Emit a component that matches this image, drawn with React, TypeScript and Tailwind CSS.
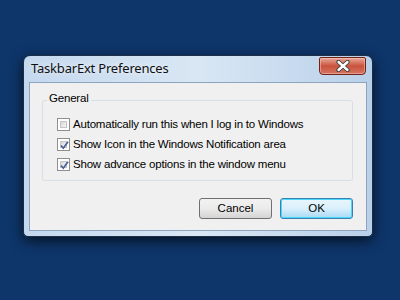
import React from "react";

const font = { fontFamily: '"Liberation Sans", Arial, sans-serif' };

function CheckBox({ checked }: { checked: boolean }) {
  return (
    <div className="w-[13px] h-[13px] border border-[#8f8f8f] bg-white p-[2px] shrink-0">
      <div className="w-full h-full border border-[#c6c6c6] bg-gradient-to-br from-[#d6d6d6] to-[#f6f6f6] relative">
        {checked && (
          <svg
            className="absolute -left-[2px] -top-[2px]"
            width="11"
            height="11"
            viewBox="0 0 11 11"
          >
            <path
              d="M2 5.5 L4.3 8.2 L9 1.8"
              fill="none"
              stroke="#4a5f97"
              strokeWidth="1.7"
            />
          </svg>
        )}
      </div>
    </div>
  );
}

function Option({ checked, label }: { checked: boolean; label: string }) {
  return (
    <div className="flex items-center gap-[3px] h-[13px]">
      <CheckBox checked={checked} />
      <span className="text-[11.5px] tracking-[-0.2px] leading-none text-black whitespace-nowrap">
        {label}
      </span>
    </div>
  );
}

export default function App() {
  return (
    <div
      className="w-[400px] h-[300px] bg-[#0e366b] pt-[55px] pl-[23px]"
      style={font}
    >
      <div className="w-[350px] h-[182px] rounded-t-[7px] rounded-b-[5px] border border-[#1b2f4a] bg-gradient-to-r from-[#c4d8ee] via-[#d9e7f4] to-[#b9d0e9] shadow-[0_4px_14px_rgba(0,0,0,0.7)] px-[5px] pb-[5px] flex flex-col">
        <div className="h-[26px] flex items-start justify-between">
          <span className="text-[13px] text-[#101010] pl-[2px] pt-[6px] leading-none [text-shadow:0_0_6px_#ffffff] [font-family:'Noto_Sans',sans-serif] tracking-[-0.2px]">
            TaskbarExt Preferences
          </span>
          <div className="w-[47px] h-[18px] mt-[1px] mr-[1px] rounded-b-[4px] rounded-t-[2px] border border-[#6e2418] bg-gradient-to-b from-[#e9a99a] via-[#c9523c] to-[#d47462] flex items-center justify-center shadow-[inset_0_0_0_1px_rgba(255,200,190,0.5)]">
            <svg width="14" height="12" viewBox="0 0 14 12">
              <path
                d="M2.5 2 L11.5 10 M11.5 2 L2.5 10"
                stroke="#3a3a3a"
                strokeWidth="4.2"
                strokeLinecap="round"
              />
              <path
                d="M2.5 2 L11.5 10 M11.5 2 L2.5 10"
                stroke="#ffffff"
                strokeWidth="2.4"
                strokeLinecap="round"
              />
            </svg>
          </div>
        </div>
        <div className="flex-1 border border-[#8da4bf] bg-[#f0f0f0] flex flex-col px-[12px] pt-[17px]">
          <div className="relative border border-[#d5dfe5] rounded-[3px] h-[81px] mr-[1px] pl-[14px] pt-[17px] flex flex-col gap-[7px]">
            <span className="absolute left-[4px] -top-[8px] px-[2px] bg-[#f0f0f0] text-[11.5px] tracking-[-0.2px] leading-none text-black">
              General
            </span>
            <Option
              checked={false}
              label="Automatically run this when I log in to Windows"
            />
            <Option checked={true} label="Show Icon in the Windows Notification area" />
            <Option checked={true} label="Show advance options in the window menu" />
          </div>
          <div className="flex justify-end gap-[8px] mt-[17px] mr-[1px]">
            <button className="w-[73px] h-[21px] rounded-[3px] border border-[#707070] bg-gradient-to-b from-[#f2f2f2] via-[#ebebeb] to-[#d4d4d4] text-[11.5px] leading-none text-black">
              Cancel
            </button>
            <button className="w-[73px] h-[21px] rounded-[3px] border border-[#3c7fb1] bg-gradient-to-b from-[#eaf6fd] via-[#d9f0fc] to-[#a7d9f5] shadow-[inset_0_0_0_1px_#48d8fb] text-[11.5px] leading-none text-black">
              OK
            </button>
          </div>
        </div>
      </div>
    </div>
  );
}
